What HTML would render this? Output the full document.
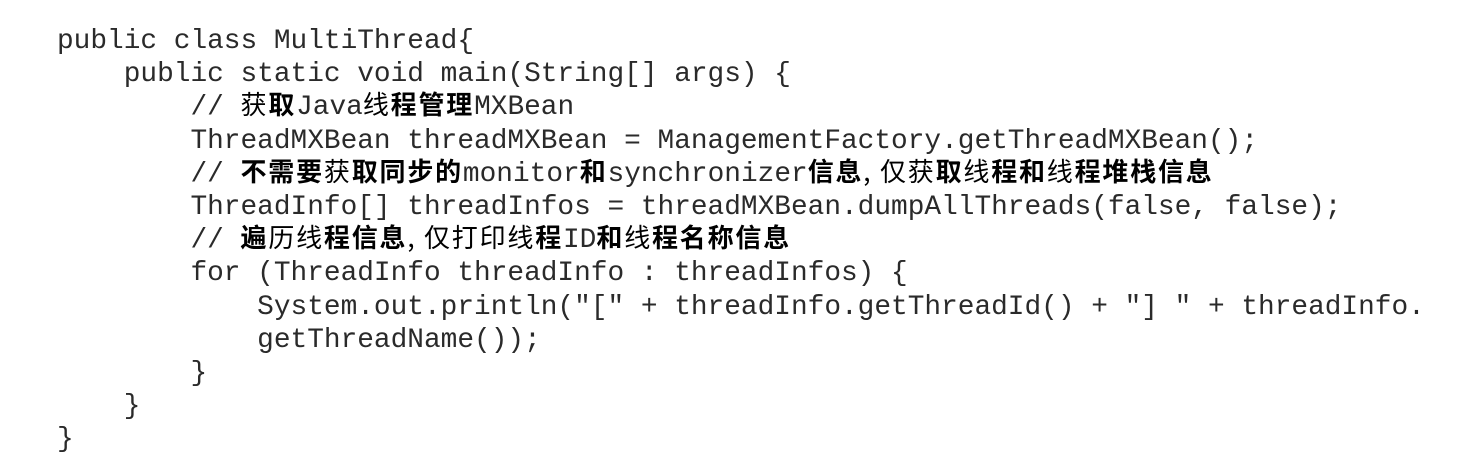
<!DOCTYPE html>
<html><head><meta charset="utf-8"><style>
html,body{margin:0;padding:0;background:#fff;width:1483px;height:471px;overflow:hidden}
.w{position:absolute;left:57px;top:25px;font-family:"Liberation Mono",monospace;font-size:27.8px;color:#2a2a2a}
.w div{height:33.2px;line-height:33.2px;white-space:pre;overflow:visible}
.c{font-family:"Noto Sans CJK SC",sans-serif;font-size:26px;letter-spacing:1.8px;color:#000;line-height:20px}
.b{font-weight:bold}
</style></head><body>
<div class="w"><div>public class MultiThread{</div><div>    public static void main(String[] args) {</div><div>        // <span class="c">获<b>取</b></span>Java<span class="c">线<b>程管理</b></span>MXBean</div><div>        ThreadMXBean threadMXBean = ManagementFactory.getThreadMXBean();</div><div>        // <span class="c"><b>不需要</b>获<b>取同步的</b></span>monitor<span class="c b">和</span>synchronizer<span class="c"><b>信息</b>, 仅获<b>取</b>线<b>程和</b>线<b>程堆栈信息</b></span></div><div>        ThreadInfo[] threadInfos = threadMXBean.dumpAllThreads(false, false);</div><div>        // <span class="c"><b>遍</b>历线<b>程信息</b>, 仅打印线<b>程</b></span>ID<span class="c"><b>和</b>线<b>程名称信息</b></span></div><div>        for (ThreadInfo threadInfo : threadInfos) {</div><div>            System.out.println("[" + threadInfo.getThreadId() + "] " + threadInfo.</div><div>            getThreadName());</div><div>        }</div><div>    }</div><div>}</div></div>
</body></html>
